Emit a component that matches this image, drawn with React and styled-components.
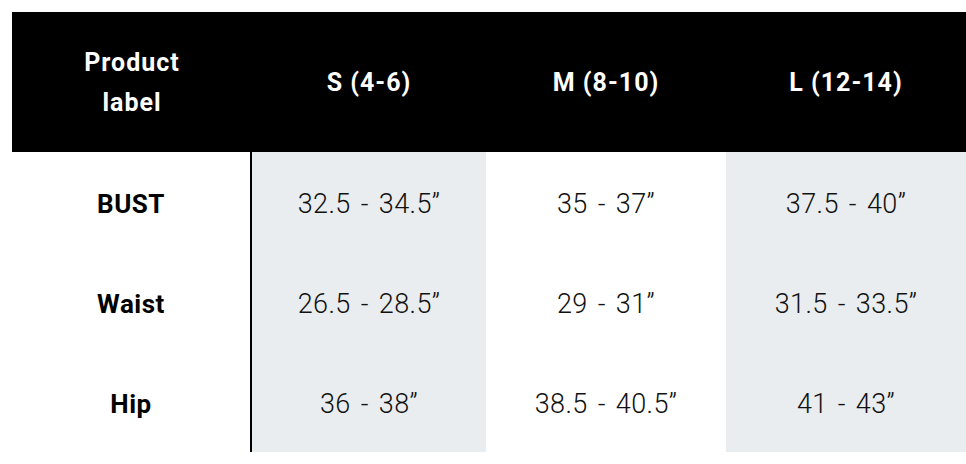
import styled, { createGlobalStyle } from 'styled-components';

const GlobalStyle = createGlobalStyle`
    body {
        margin: 0;
        background: #ffffff;
        font-family: Roboto, "Liberation Sans", sans-serif;
    }
`;

const Page = styled.div`
    padding: 12px 0 0 12px;
`;

const Grid = styled.div`
    display: grid;
    grid-template-columns: 240px 234px 240px 240px;
    width: 954px;
`;

const HeadCell = styled.div`
    height: 140px;
    padding-top: 2px;
    box-sizing: border-box;
    background: #000000;
    color: #ffffff;
    display: flex;
    align-items: center;
    justify-content: center;
    text-align: center;
    font-size: 25px;
    font-weight: 700;
    letter-spacing: 1px;
    line-height: 40px;
`;

const LabelCell = styled.div`
    height: 100px;
    padding-top: 3px;
    box-sizing: border-box;
    border-right: 2px solid #000000;
    display: flex;
    align-items: center;
    justify-content: center;
    font-size: 26px;
    font-weight: 700;
    letter-spacing: 0.5px;
    color: #000000;
`;

const ValueCell = styled.div`
    height: 100px;
    padding-top: 3px;
    box-sizing: border-box;
    background: ${(props) => (props.$shaded ? '#e9edf0' : '#ffffff')};
    display: flex;
    align-items: center;
    justify-content: center;
    font-size: 27px;
    font-weight: 300;
    letter-spacing: 0.4px;
    word-spacing: 3px;
    color: #111111;
`;

const sizes = ['S (4-6)', 'M (8-10)', 'L (12-14)'];

const rows = [
    { label: 'BUST', values: ['32.5 - 34.5”', '35 - 37”', '37.5 - 40”'] },
    { label: 'Waist', values: ['26.5 - 28.5”', '29 - 31”', '31.5 - 33.5”'] },
    { label: 'Hip', values: ['36 - 38”', '38.5 - 40.5”', '41 - 43”'] },
];

const App = () => {
    return (
        <Page>
            <GlobalStyle />
            <Grid>
                <HeadCell>Product<br />label</HeadCell>
                {sizes.map((size) => (
                    <HeadCell key={size}>{size}</HeadCell>
                ))}
                {rows.map((row) => [
                    <LabelCell key={row.label}>{row.label}</LabelCell>,
                    ...row.values.map((value, i) => (
                        <ValueCell key={row.label + i} $shaded={i !== 1}>
                            {value}
                        </ValueCell>
                    )),
                ])}
            </Grid>
        </Page>
    );
};

export default App;
